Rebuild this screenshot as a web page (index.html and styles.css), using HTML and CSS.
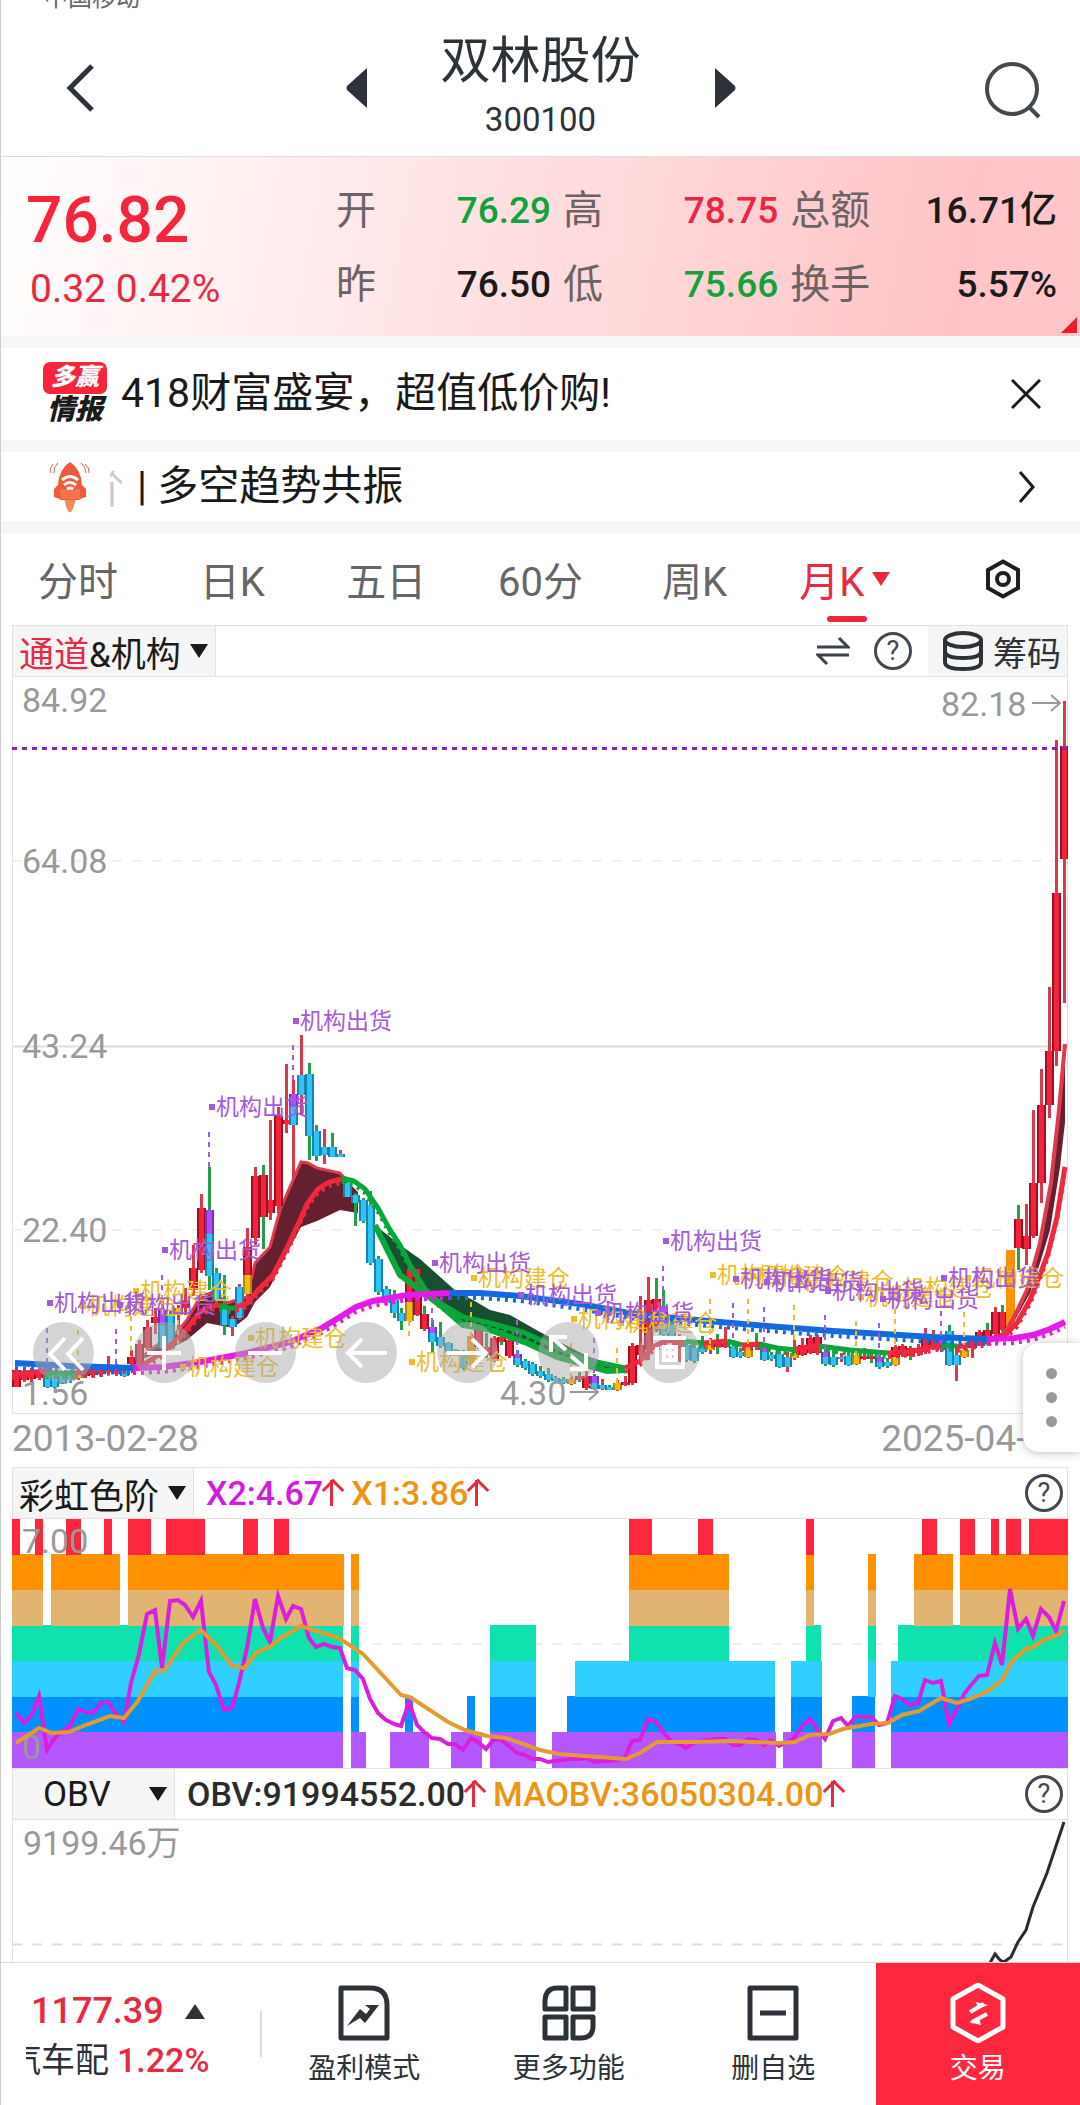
FILE: index.html
```html
<!DOCTYPE html>
<html lang="zh-CN">
<head>
<meta charset="utf-8">
<meta name="viewport" content="width=device-width, initial-scale=1">
<title>双林股份 300100</title>
<link rel="stylesheet" href="styles.css">
</head>
<body>
<div class="page">
  <div class="status"><span>中国移动</span></div>
  <header class="topbar">
    <button class="plain back" aria-label="返回"><svg width="34" height="52" viewBox="0 0 34 52"><path d="M29 4 7 26l22 22" fill="none" stroke="#2c3238" stroke-width="5"/></svg></button>
    <div class="title-group">
      <button class="plain" aria-label="上一只"><svg width="22" height="40" viewBox="0 0 22 40"><path d="M21 0v40L1 22q-1-2 0-4z" fill="#2c3238"/></svg></button>
      <div class="title"><h1>双林股份</h1><p>300100</p></div>
      <button class="plain" aria-label="下一只"><svg width="22" height="40" viewBox="0 0 22 40"><path d="M1 0v40l20-18q1-2 0-4z" fill="#2c3238"/></svg></button>
    </div>
    <button class="plain search" aria-label="搜索"><svg width="60" height="60" viewBox="0 0 60 60" fill="none" stroke="#44484f" stroke-width="4"><circle cx="29" cy="29" r="25"/><path d="m46 47 10 10"/></svg></button>
  </header>

  <section class="quote">
    <div class="price"><strong>76.82</strong><span>0.32 0.42%</span></div>
    <dl class="stats">
      <dt>开</dt><dd class="down">76.29</dd><dt>高</dt><dd class="up">78.75</dd><dt>总额</dt><dd>16.71亿</dd>
      <dt>昨</dt><dd>76.50</dd><dt>低</dt><dd class="down">75.66</dd><dt>换手</dt><dd>5.57%</dd>
    </dl>
    <i class="corner"></i>
  </section>

  <section class="notice">
    <span class="badge"><b>多赢</b><em>情报</em></span>
    <a href="#sale">418财富盛宴，超值低价购!</a>
    <button class="plain" aria-label="关闭"><svg width="30" height="30" viewBox="0 0 30 30"><path d="m1 1 28 28M29 1 1 29" stroke="#1a1a1a" stroke-width="3"/></svg></button>
  </section>

  <section class="notice signal">
    <svg width="44" height="52" viewBox="0 0 44 52">
      <path d="M17 37h12l-2 8q-3 8-4 6-2 1-4-6z" fill="#f58a5c"/>
      <path d="M23 1q11 7 12 23l4 4v8q-5 1-7 3H14q-2-2-7-3v-8l4-4Q12 8 23 1z" fill="#ee5a3c"/>
      <path d="M13 28h20v10H14z" fill="#f4754c"/>
      <path d="M15 19q8-7 16 0M17 24q6-5 12 0M20 28q3-2 6 0" fill="none" stroke="#fff" stroke-width="3"/>
      <path d="M6 3Q2 7 4 12M11 2Q6 6 7 12M38 3q5 4 4 9M34 2q5 4 5 10" fill="none" stroke="#d9604f" stroke-width="1"/>
    </svg>
    <span class="fragment">个</span>
    <a href="#signal">| 多空趋势共振</a>
    <svg width="20" height="34" viewBox="0 0 20 34"><path d="m3 2 13 15L3 32" fill="none" stroke="#1a1a1a" stroke-width="3"/></svg>
  </section>

  <nav class="tabs">
    <button class="plain">分时</button>
    <button class="plain">日K</button>
    <button class="plain">五日</button>
    <button class="plain">60分</button>
    <button class="plain">周K</button>
    <button class="plain active">月K<i class="tri"></i></button>
    <button class="plain" aria-label="设置"><svg width="40" height="40" viewBox="0 0 40 40" fill="none" stroke="#1d1f22" stroke-width="4"><path d="M20 2.500 35 11v18l-15 8.500L5 29V11z"/><circle cx="20" cy="20" r="6"/></svg></button>
  </nav>

  <main class="charts">
    <div class="bar">
      <button class="picker"><span><span class="up">通道</span>&amp;机构</span><i class="tri"></i></button>
      <div class="bar-tools">
        <button class="plain" aria-label="切换"><svg width="34" height="30" viewBox="0 0 34 30"><path d="M1 11h31l-9-9M33 19H2l9 9" fill="none" stroke="#3d4249" stroke-width="3"/></svg></button>
        <button class="plain help" aria-label="帮助">?</button>
      </div>
      <button class="chips"><svg width="42" height="40" viewBox="0 0 42 40" fill="none" stroke="#2c3238" stroke-width="4"><ellipse cx="21" cy="9" rx="18" ry="7"/><path d="M3 9v22q0 7 18 7t18-7V9M3 20q0 7 18 7t18-7"/></svg>筹码</button>
    </div>
    <div class="kline">
      <svg id="kline" viewBox="12 677 1056 737" role="img" aria-label="月K线图"></svg>
      <div class="tools">
        <button aria-label="最左"><svg viewBox="0 0 61 61"><path d="M32 16 17 32l15 16M50 16 35 32l15 16"/></svg></button>
        <button aria-label="放大"><svg viewBox="0 0 61 61"><path d="M30 14v34M13 31h34"/></svg></button>
        <button aria-label="缩小"><svg viewBox="0 0 61 61"><path d="M13 31h34"/></svg></button>
        <button aria-label="左移"><svg viewBox="0 0 61 61"><path d="M51 31H12M26 17 12 31l14 14"/></svg></button>
        <button aria-label="右移"><svg viewBox="0 0 61 61"><path d="M10 31h39M35 17l14 14-14 14"/></svg></button>
        <button aria-label="全屏"><svg viewBox="0 0 61 61"><path d="M13 30V15h16M13 15l15 13M48 31v16H32M48 47 33 34"/></svg></button>
        <button aria-label="画线"><svg viewBox="0 0 61 61"><path d="M14 16h33M18 25v20h26V25M25 25h12v13H25zM31 25v13M25 31h12"/></svg></button>
      </div>
    </div>
    <div class="dates"><time>2013-02-28</time><time>2025-04-18</time>
      <button class="handle" aria-label="更多"><i></i><i></i><i></i></button>
    </div>

    <div class="bar">
      <button class="picker">彩虹色阶<i class="tri"></i></button>
      <p class="values"><span class="mag">X2:4.67</span><i class="rise"></i><span class="org">X1:3.86</span><i class="rise"></i></p>
      <button class="plain help last" aria-label="帮助">?</button>
    </div>
    <svg id="rainbow" viewBox="12 0 1056 249" role="img" aria-label="彩虹色阶图"></svg>

    <div class="bar">
      <button class="picker obv">OBV<i class="tri"></i></button>
      <p class="values"><span>OBV:91994552.00</span><i class="rise"></i><span class="org">MAOBV:36050304.00</span><i class="rise"></i></p>
      <button class="plain help last" aria-label="帮助">?</button>
    </div>
    <svg viewBox="12 1820 1056 142" role="img" aria-label="OBV图">
      <path d="M12.500 1820v142M1067.500 1820v142" class="frame"/>
      <path d="M12 1944.500h1056" stroke="#ddd" stroke-width="2" stroke-dasharray="10 10"/>
      <text x="23" y="1855" class="axis">9199.46万</text>
      <path d="m990 1963 5-9 5 6 4 2 7-5 7-15 8-12 7-23 14-34 17-51" fill="none" stroke="#2b2b2b" stroke-width="3"/>
    </svg>
  </main>

  <footer class="bottom">
    <div class="index">
      <div class="index-top"><span class="up">1177.39</span><i class="tri upward"></i></div>
      <div class="index-row"><span class="sector">汽车配</span><span class="up">1.22%</span></div>
    </div>
    <button class="plain item"><svg viewBox="0 0 60 60"><path d="M7 5h29q17 0 17 17v33H7z"/><path d="m13 43 13-17 6 5 4-5-5-4h14L31 40l-5-5z" class="solid"/></svg>盈利模式</button>
    <button class="plain item"><svg viewBox="0 0 60 60"><path d="M18 5h9v21H6V17Q7 5 18 5zM34 5h20v21H34zM6 34h21v21H6zM34 34h20v9q0 12-12 12h-8z"/></svg>更多功能</button>
    <button class="plain item"><svg viewBox="0 0 60 60"><path d="M7 5h46v50H7zM17 30h26"/></svg>删自选</button>
    <button class="plain item trade"><svg viewBox="0 0 60 60"><path d="m30 2 25 14v28L30 58 5 44V16z"/><path d="m22 29 14-8M24 39l15-8" class="thin"/><path d="m28 19 12 3-10 4zM33 42l-12-3 10-4z" class="solid"/></svg>交易</button>
  </footer>
</div>
<script src="chart.js"></script>
</body>
</html>
```
FILE: styles.css
```css
* { box-sizing: border-box; }
body { margin: 0; background: #fff; color: #1a1a1a; font-family: Roboto, "Noto Sans CJK SC", sans-serif; font-size: 40px; }
h1, p, dl, dd { margin: 0; }
svg { display: block; flex: none; }
i, em { font-style: normal; }
a { color: inherit; text-decoration: none; }
button { font: inherit; color: inherit; border: 0; padding: 0; }
.plain { background: none; display: flex; align-items: center; justify-content: center; }
.page { border-left: 1px solid #ccc; }
.up { color: #e8293f; }
.down { color: #12a13c; }
.mag { color: #d41ae0; }
.org { color: #ee9413; }

.status { height: 12px; overflow: hidden; display: flex; align-items: flex-end; padding-left: 43px; font-size: 24px; line-height: 28px; color: #666; }
.topbar { height: 145px; border-bottom: 1px solid #ddd; display: grid; grid-template-columns: 1fr auto 1fr; align-items: center; padding: 8px 37px 0; color: #2c3238; }
.topbar .search { padding-top: 4px; justify-self: end; }
.back { margin-left: 25px; justify-self: start; }
.title-group { display: flex; align-items: center; gap: 73px; }
.title { text-align: center; }
.title h1 { font-size: 50px; line-height: 64px; font-weight: 400; }
.title p { font-size: 33px; line-height: 54px; }

.quote { position: relative; height: 179px; display: flex; background: linear-gradient(100deg, #fff 0%, #ffe4e5 40%, #ffc4c7 88%, #ffc6c9); }
.price { width: 335px; padding: 26px 0 0 25px; display: flex; flex-direction: column; color: #f5253c; }
.price strong { font-size: 64px; line-height: 76px; font-weight: 500; }
.price span { font-size: 39px; line-height: 60px; padding-left: 4px; color: #e8293f; }
.stats { flex: 1; display: grid; grid-template-columns: 40px 14fr 40px 14fr 80px 15fr; column-gap: 12px; grid-auto-rows: 74px; padding: 17px 23px 0 0; line-height: 74px; }
.stats dt { color: #6b6365; }
.stats dd { text-align: right; font-size: 37px; font-weight: 500; white-space: nowrap; }
.corner { position: absolute; right: 3px; bottom: 3px; border-left: 16px solid transparent; border-bottom: 16px solid #ec1c2e; }

.notice { height: 104px; border-top: 12px solid #f6f6f6; display: flex; align-items: center; padding: 0 39px 0 40px; gap: 12px; }
.notice a { flex: 1; color: #1a1a1a; font-size: 41px; line-height: 60px; padding-bottom: 2px; }
.signal { height: 81px; padding: 0 43px 0 46px; gap: 15px; }
.fragment { width: 12px; overflow: hidden; text-indent: -18px; white-space: nowrap; color: #ccc; margin-left: 4px; }
.badge { width: 68px; display: flex; flex-direction: column; align-items: center; font-size: 24px; line-height: 30px; font-weight: 900; font-style: italic; }
.badge b { width: 64px; height: 32px; border-radius: 7px; background: #f5253c; color: #fff; text-align: center; }
.badge em { font-style: italic; font-size: 28px; line-height: 32px; }

.tabs { height: 104px; border-top: 12px solid #f6f6f6; display: grid; grid-template-columns: repeat(7, 1fr); color: #666; }
.tabs button { position: relative; }
.tabs .active { color: #e8293f; gap: 8px; padding-right: 8px; }
.tabs .active::after { content: ""; position: absolute; bottom: 3px; left: 50%; margin-left: -22px; width: 40px; height: 6px; border-radius: 3px; background: #e8293f; }
.tri { flex: none; border: 9px solid transparent; border-top: 14px solid currentColor; border-bottom: 0; }
.tri.upward { border: 10px solid transparent; border-bottom: 15px solid #2c3238; border-top: 0; }

.charts { padding: 0 12px 0 11px; }
.charts > svg, .kline > svg { width: 100%; height: auto; }
.bar { height: 52px; border: 1px solid #e2e2e2; display: flex; font-size: 34px; }
.picker { display: flex; align-items: center; gap: 9px; padding: 0 7px 0 6px; background: #f5f5f5; border-right: 1px solid #e2e2e2; white-space: nowrap; font-size: 35px; }
.obv { width: 162px; justify-content: space-between; padding-left: 30px; }
.bar-tools { margin-left: auto; display: flex; gap: 24px; padding-right: 16px; }
.help { width: 38px; height: 38px; margin: 6px 0; border: 3px solid #44484f; border-radius: 50%; color: #44484f; font-size: 27px; }
.help.last { margin-left: auto; margin-right: 4px; }
.chips { display: flex; align-items: center; gap: 9px; padding: 0 6px 0 14px; background: #f5f5f5; color: #2c3238; }
.values { display: flex; align-items: center; padding-left: 12px; font-weight: 500; color: #2b2b2b; }
.rise { position: relative; width: 17px; height: 26px; margin-right: 11px; background: linear-gradient(#e8293f, #e8293f) center / 3px 26px no-repeat; }
.rise::before { content: ""; position: absolute; top: 2px; left: 2px; width: 13px; height: 13px; border: 3px solid #e8293f; border-width: 3px 0 0 3px; transform: rotate(45deg); }

.kline { position: relative; }
.frame { fill: none; stroke: #e2e2e2; stroke-width: 1; }
.axis { font-size: 34px; fill: #999; }
.mark { font-size: 23px; }
.tools { position: absolute; left: 21px; bottom: 31px; display: flex; gap: 40px; }
.tools button { width: 61px; height: 61px; border-radius: 50%; background: rgba(170, 170, 170, .5); }
.tools svg { fill: none; stroke: #fff; stroke-width: 4; }
.dates { position: relative; height: 53px; display: flex; justify-content: space-between; align-items: center; padding-bottom: 5px; font-size: 37px; color: #999; }
.handle { position: absolute; right: -12px; bottom: 15px; width: 57px; height: 109px; background: #fff; border-radius: 16px 0 0 16px; box-shadow: 0 1px 10px rgba(0, 0, 0, .25); display: flex; flex-direction: column; align-items: center; justify-content: center; gap: 13px; }
.handle i { width: 11px; height: 11px; border-radius: 50%; background: #999; }

.bottom { height: 143px; border-top: 1px solid #ddd; display: flex; color: #2c3238; }
.index { width: 261px; padding: 24px 0 0 25px; background: linear-gradient(#ddd, #ddd) right center / 2px 46px no-repeat; }
.index-top { display: flex; align-items: center; gap: 21px; font-size: 36px; line-height: 48px; padding-left: 5px; font-weight: 500; }
.index-row { display: flex; align-items: center; gap: 8px; font-size: 34px; line-height: 50px; }
.index-row .up { font-weight: 500; }
.sector { width: 83px; overflow: hidden; display: flex; justify-content: flex-end; white-space: nowrap; }
.item { flex: 1; flex-direction: column; justify-content: flex-start; padding-top: 20px; font-size: 28px; line-height: 40px; gap: 6px; }
.item svg { width: 60px; height: 60px; fill: none; stroke: #2c3238; stroke-width: 5; stroke-linejoin: round; }
.item .thin { stroke-width: 4; }
.item .solid { fill: #2c3238; stroke: none; }
.trade { background: #ff273d; color: #fff; }
.trade svg { stroke: #fff; }
.trade .solid { fill: #fff; }
```
FILE: chart.js
```javascript
const STEP = 1056 / 137;
const cx = i => Math.round(12 + STEP * (i + 0.5));
const COLORS = { r: ['#a50d20', '#f0253c'], c: ['#1883ac', '#2fc4f4'], p: ['#7a2fc0', '#b04cf5'], y: ['#b5850f', '#f7b80c'], o: ['#f59008', '#ff9205'] };
const WICK = { r: '#d93a4b', g: '#22a04a' };

// index, high, low, open/close top, bottom, body colour, wick colour, optional [split y, lower colour]
const candles = [
[0,1369,1387,1370,1387,'r','r'],[1,1370,1382,1372,1380,'r','r'],[2,1368,1382,1371,1379,'r','r'],[3,1365,1380,1370,1378,'r','r'],
[4,1367,1388,1367,1387,'p','g',1376,'c'],[5,1372,1388,1376,1387,'c','g'],[6,1372,1384,1375,1383,'c','g'],[7,1370,1383,1374,1380,'c','g'],
[8,1367,1380,1370,1378,'y','r'],[9,1366,1378,1370,1376,'r','r'],[10,1366,1378,1369,1375,'r','r'],[11,1365,1377,1368,1374,'r','r'],
[12,1356,1374,1366,1372,'r','r'],[13,1364,1376,1366,1374,'p','r'],[14,1366,1377,1370,1376,'c','g'],[15,1350,1366,1357,1364,'r','r'],
[16,1340,1364,1344,1363,'r','r'],[17,1320,1350,1327,1348,'r','r'],[18,1308,1334,1317,1323,'r','r'],[19,1300,1350,1310,1348,'p','r',1325,'c'],
[20,1310,1350,1315,1347,'c','g'],[21,1305,1332,1308,1315,'y','r'],[22,1288,1315,1300,1308,'r','r'],[23,1245,1296,1268,1290,'r','r'],
[24,1194,1273,1208,1270,'r','r'],[25,1167,1290,1210,1276,'p','g',1234,'c'],[26,1268,1305,1273,1300,'c','g'],[27,1275,1335,1308,1325,'c','g'],
[28,1316,1336,1319,1327,'c','r'],[29,1284,1320,1287,1318,'c','r'],[30,1228,1300,1247,1294,'r','r',1275,'y'],[31,1167,1245,1176,1238,'r','r'],
[32,1165,1249,1175,1217,'r','g'],[33,1120,1220,1200,1213,'r','r'],[34,1107,1213,1116,1206,'r','r'],[35,1064,1133,1120,1124,'r','r'],
[36,1080,1180,1094,1125,'p','r',1107,'c'],[37,1035,1114,1075,1095,'c','r'],[38,1063,1160,1074,1136,'c','g'],[39,1125,1161,1131,1156,'c','g'],
[40,1129,1164,1147,1155,'c','r'],[41,1133,1157,1147,1157,'c','g'],[42,1150,1157,1154,1157,'c','r'],[43,1181,1197,1183,1197,'c','g'],
[44,1193,1226,1195,1203,'c','g'],[45,1198,1223,1200,1221,'c','g'],[46,1191,1265,1205,1263,'c','g'],[47,1256,1295,1259,1292,'c','g'],
[48,1286,1305,1289,1303,'c','g'],[49,1290,1318,1300,1313,'c','g'],[50,1308,1330,1313,1321,'c','g'],[51,1269,1322,1269,1321,'r','r',1302,'y'],
[52,1269,1316,1269,1315,'r','r'],[53,1306,1331,1314,1329,'r','g'],[54,1320,1352,1327,1342,'p','g',1333,'c'],[55,1322,1348,1337,1346,'c','g'],
[56,1342,1353,1343,1352,'c','g'],[57,1349,1354,1350,1354,'c','g'],[58,1350,1370,1355,1368,'c','g'],[59,1334,1366,1336,1365,'o','r'],
[60,1328,1349,1330,1347,'r','r'],[61,1333,1358,1347,1355,'r','g'],[62,1336,1362,1338,1361,'r','r'],[63,1330,1345,1337,1342,'r','g'],
[64,1336,1358,1340,1356,'r','r'],[65,1350,1367,1354,1365,'p','g',1358,'c'],[66,1359,1370,1361,1368,'c','g'],[67,1362,1376,1364,1374,'c','g'],
[68,1366,1378,1371,1376,'c','g'],[69,1368,1382,1374,1380,'c','g'],[70,1376,1382,1378,1381,'c','g'],[71,1377,1384,1379,1383,'c','g'],
[72,1376,1385,1379,1384,'y','r'],[73,1372,1382,1376,1380,'r','g'],[74,1363,1390,1376,1388,'r','r'],[75,1374,1390,1376,1389,'p','g',1383,'c'],
[76,1379,1390,1385,1389,'c','r'],[77,1385,1390,1387,1390,'c','g'],[78,1380,1391,1383,1390,'y','r'],[79,1376,1386,1382,1385,'r','r'],
[80,1343,1385,1346,1383,'r','r'],[81,1296,1360,1345,1355,'r','r'],[82,1277,1360,1300,1350,'r','r'],[83,1278,1332,1299,1330,'r','g'],
[84,1290,1337,1306,1335,'p','g',1317,'c'],[85,1316,1340,1325,1337,'c','g'],[86,1334,1362,1342,1360,'r','r'],[87,1340,1362,1345,1360,'c','g'],
[88,1342,1363,1348,1361,'c','g'],[89,1336,1354,1346,1352,'c','g'],[90,1338,1354,1343,1350,'y','r'],[91,1334,1354,1342,1347,'r','g'],
[92,1327,1348,1342,1347,'r','r'],[93,1340,1358,1346,1357,'c','g'],[94,1348,1358,1352,1356,'c','g'],[95,1344,1358,1347,1357,'y','r'],
[96,1333,1350,1342,1347,'r','g'],[97,1344,1361,1346,1360,'p','g',1352,'c'],[98,1352,1361,1355,1359,'c','g'],[99,1350,1368,1354,1367,'c','g'],
[100,1352,1372,1357,1367,'c','r'],[101,1340,1360,1353,1358,'y','r'],[102,1338,1356,1345,1355,'r','r'],[103,1335,1354,1338,1353,'r','r'],
[104,1335,1355,1337,1353,'r','r'],[105,1348,1366,1352,1364,'p','g',1357,'c'],[106,1350,1367,1357,1365,'c','g'],[107,1353,1362,1357,1359,'c','r'],
[108,1350,1366,1356,1365,'c','g'],[109,1350,1365,1355,1364,'y','g'],[110,1348,1360,1356,1359,'r','r'],[111,1350,1363,1356,1359,'r','g'],
[112,1350,1369,1357,1367,'p','g',1362,'c'],[113,1358,1368,1362,1366,'c','g'],[114,1345,1366,1347,1365,'r','r',1357,'y'],[115,1344,1357,1346,1355,'r','r'],
[116,1346,1360,1348,1356,'r','g'],[117,1344,1356,1348,1353,'r','r'],[118,1328,1354,1338,1352,'r','r'],[119,1330,1350,1340,1348,'r','r'],
[120,1336,1352,1340,1350,'p','r'],[121,1325,1366,1331,1365,'c','g'],[122,1345,1381,1355,1365,'c','r'],[123,1345,1358,1350,1357,'y','r'],
[124,1336,1358,1338,1348,'r','r'],[125,1330,1346,1332,1343,'r','r'],[126,1323,1345,1330,1342,'r','g'],[127,1307,1336,1312,1334,'r','r'],
[128,1305,1332,1312,1330,'r','g'],[129,1250,1328,1250,1328,'o','r'],[130,1205,1270,1219,1248,'r','g'],[131,1204,1265,1236,1249,'r','r'],
[132,1110,1238,1183,1236,'r','r'],[133,1069,1203,1105,1183,'r','r'],[134,987,1118,1051,1105,'r','r'],[135,740,1066,893,1051,'r','r'],
[136,701,1003,746,859,'r','r']];

const poly = (pts, attrs) => `<polyline points="${pts}" fill="none" ${attrs}/>`;
const area = (pts, fill) => `<polygon points="${pts}" fill="${fill}"/>`;
let out = '<path class="frame" d="M12.5 677V1414M1067.5 677V1414M12 1413.5H1068"/>';
out += '<path d="M12 861H1068M12 1230H1068" stroke="#e2e2e2" stroke-dasharray="10 10"/><path d="M12 1046.500H1068" stroke="#ddd" stroke-width="2"/>';
[[700, '84.92'], [861, '64.08'], [1046, '43.24'], [1230, '22.40'], [1393, '1.56']].forEach(([y, t]) => {
  out += `<text class="axis" x="22" y="${y + 12}">${t}</text>`;
});

const RISE = '139,1360 153,1348 177,1332 187,1320 200,1297 213,1292 227,1303 247,1297 255,1263 270,1247 280,1210 301,1162 308,1163 317,1168 340,1173 348,1182';
const FALL = '625,1370 607,1371 557,1357 527,1343 487,1329 463,1325 440,1305 400,1275 375,1225';
const LAST = '1005,1333 1015,1315 1027,1290 1040,1243 1051,1183 1059,1110 1065,1044';
out += area(RISE + ' 358,1192 358,1213 340,1210 317,1221 301,1227 287,1253 270,1287 255,1302 247,1317 233,1328 207,1323 187,1340 167,1350', '#65202f');
out += poly(RISE, 'stroke="#e03a4c" stroke-width="3"');
out += area('375,1225 400,1245 420,1259 457,1292 473,1300 490,1310 510,1315 540,1332 587,1356 ' + FALL, '#17502f');

candles.forEach(([i, h, l, t, b, body, wick, split, lower]) => {
  const x = cx(i);
  const bar = (c, y1, y2) => `<rect x="${x - 4}" y="${y1}" width="9" height="${y2 - y1}" fill="${COLORS[c][0]}"/><rect x="${x - 2}" y="${y1}" width="5" height="${y2 - y1}" fill="${COLORS[c][1]}"/>`;
  out += `<rect x="${x - 1}" y="${h}" width="3" height="${l - h}" fill="${WICK[wick]}"/>`;
  out += split ? bar(body, t, split) + bar(lower, split, b) : bar(body, t, b);
});

out += area(LAST + ' 1065,1122 1060,1167 1050,1230 1040,1263 1030,1293 1015,1320', '#65202f') + poly(LAST, 'stroke="#e03a4c" stroke-width="4"');
out += poly(FALL, 'stroke="#08a83a" stroke-width="6"');

const RED = '#f0283f', GREEN = '#0aa63c', BLUE = '#136ae0', PINK = '#e61ae6';
const trend = [
[RED, '12,1374 46,1371'], [GREEN, '46,1373 75,1373'], [RED, '75,1373 133,1367 146,1363 160,1354 180,1337 200,1312 210,1306 220,1305'],
[GREEN, '220,1305 228,1308 236,1308'], [RED, '236,1307 247,1303 260,1288 273,1275 287,1248 300,1220 307,1204 318,1189 329,1182 342,1179'],
[GREEN, '342,1178 354,1181 365,1189 378,1208 390,1230 400,1245 410,1265 425,1289 440,1303 463,1317 490,1323 523,1332 547,1343 587,1360 625,1368'],
[RED, '625,1368 640,1361 653,1347 665,1341 683,1340'], [GREEN, '683,1341 703,1343'], [RED, '703,1343 727,1341'], [GREEN, '727,1341 742,1345'],
[RED, '742,1345 760,1344'], [GREEN, '760,1344 777,1348 796,1350'], [RED, '796,1349 819,1345'], [GREEN, '819,1346 850,1350 888,1353'],
[RED, '888,1353 913,1351 941,1345'], [GREEN, '941,1345 957,1346'], [RED, '957,1347 987,1341 1007,1333 1017,1323 1030,1300 1040,1275 1048,1253 1057,1217 1065,1167']];
const longTerm = [[BLUE, '15,1363 70,1366 133,1368'], [PINK, '133,1368 163,1367 200,1362 247,1353 290,1342 320,1329 340,1317 356,1307 373,1301 407,1295 449,1293'],
[BLUE, '449,1293 480,1293 520,1296 580,1304 640,1315 720,1322 767,1326 833,1331 933,1337 987,1339'], [PINK, '987,1339 1015,1338 1033,1335 1050,1329 1065,1322']];
trend.forEach(([c, p]) => { out += `<g transform="translate(0 4)">${poly(p, `stroke="${c}" stroke-width="4" stroke-dasharray="3 5"`)}</g>` + poly(p, `stroke="${c}" stroke-width="5"`); });
longTerm.forEach(([c, p]) => { out += `<g transform="translate(0 5)">${poly(p, `stroke="${c}" stroke-width="4" stroke-dasharray="3 5"`)}</g>` + poly(p, `stroke="${c}" stroke-width="6"`); });

const VIOLET = '#a55adb', GOLD = '#edbd2c';
[[4,1328,1368],[13,1329,1370],[19,1275,1310],[25,1132,1167],[36,1045,1080],[54,1308,1327],[65,1320,1354],[75,1338,1376],[84,1266,1306],[93,1303,1340],[97,1307,1346],[105,1315,1352],[112,1323,1356],[120,1311,1340]]
  .forEach(([i, a, b]) => { out += `<path d="M${cx(i)} ${a}V${b}" stroke="${VIOLET}" stroke-width="2" stroke-dasharray="5 5"/>`; });
[[8,1330,1370],[15,1316,1357],[21,1320,1345],[51,1321,1337],[59,1302,1336],[72,1343,1378],[78,1348,1383],[90,1299,1345],[95,1299,1345],[101,1305,1345],[109,1321,1355],[114,1309,1347],[123,1312,1345]]
  .forEach(([i, a, b]) => { out += `<path d="M${cx(i)} ${a}V${b}" stroke="${GOLD}" stroke-width="2" stroke-dasharray="5 5"/>`; });
const marks = { [GOLD]: [[80,1306],[133,1291],[248,1338],[180,1367],[471,1278],[571,1319],[409,1362],[618,1323],[710,1275],[750,1276],[795,1281],[895,1288],[858,1297],[965,1278]],
  [VIOLET]: [[47,1303],[117,1305],[162,1250],[209,1107],[293,1021],[432,1263],[518,1295],[595,1313],[663,1241],[733,1279],[764,1282],[825,1291],[880,1299],[941,1278]] };
Object.entries(marks).forEach(([c, list]) => list.forEach(([x, y]) => {
  out += `<rect x="${x}" y="${y - 3}" width="6" height="6" fill="${c}"/><text class="mark" x="${x + 7}" y="${y + 8}" fill="${c}">${c === GOLD ? '机构建仓' : '机构出货'}</text>`;
}));
out += '<path d="M12 748.500H1068" stroke="#8a22b8" stroke-width="3" stroke-dasharray="5 5"/>';
out += '<text class="axis" x="941" y="716">82.18</text><path d="M1032 703h28m-9-8 9 8-9 8" fill="none" stroke="#999" stroke-width="2"/>';
out += '<text class="axis" x="500" y="1405">4.30</text><path d="M570 1392h28m-9-8 9 8-9 8" fill="none" stroke="#999" stroke-width="2"/>';
document.getElementById('kline').innerHTML = out;

// Rainbow: one digit per month gives the stacked height
const LEVELS = '7667466776667' + '64' + '777' + '66' + '77777' + '66666' + '77' + '66' + '77' + '6666666' + '061000' + '11211' + '000' + '1121' + '0' + '444444' + '00' + '112' + '3333333' + '777' + '666666' + '77' + '66' + '333333' + '0' + '133' + '74' + '0000' + '226' + '00' + '344' + '677' + '664' + '7766' + '76' + '776' + '77777';
const BANDS = ['#b557ff', '#0090ff', '#2fd0ff', '#0fe2ae', '#e1b571', '#ff9000', '#ff273d'];
const H = 248, band = H / 7;
const sy = v => Math.round((v - 1523) / 257 * H);
let rb = '<path class="frame" d="M12.500 0V249M1067.500 0V249"/><path d="M12 125H1068" stroke="#ddd" stroke-dasharray="10 10"/>';
BANDS.forEach((fill, k) => {
  for (let i = 0; i < LEVELS.length; i++) {
    if (+LEVELS[i] <= k) continue;
    let end = i;
    while (+LEVELS[end] > k) end++;
    rb += `<rect x="${Math.round(12 + i * STEP)}" y="${Math.round(H - band * (k + 1))}" width="${Math.round((end - i) * STEP)}" height="${Math.ceil(band)}" fill="${fill}"/>`;
    i = end;
  }
});
const fast = [1724,1734,1727,1706,1762,1751,1743,1738,1720,1723,1724,1714,1713,1725,1733,1693,1663,1621,1617,1677,1608,1607,1612,1625,1608,1682,1695,1721,1719,1693,1657,1606,1636,1650,1603,1627,1613,1616,1646,1656,1653,1656,1657,1677,1679,1689,1710,1724,1731,1735,1738,1713,1736,1744,1750,1751,1756,1756,1762,1750,1754,1761,1751,1752,1758,1765,1768,1772,1772,1775,1774,1773,1772,1772,1771,1775,1774,1774,1773,1770,1753,1752,1730,1733,1744,1753,1756,1760,1755,1753,1752,1751,1751,1757,1757,1751,1752,1757,1752,1758,1754,1750,1737,1730,1741,1751,1732,1729,1737,1727,1728,1728,1736,1734,1706,1710,1716,1714,1690,1693,1691,1735,1722,1704,1694,1686,1685,1651,1674,1596,1637,1627,1644,1616,1625,1639,1608];
const slow = [[16,1755],[39,1740],[52,1745],[69,1744],[83,1737],[110,1727],[124,1729],[138,1712],[155,1681],[164,1680],[183,1651],[201,1638],[217,1655],[232,1675],[244,1677],[257,1661],[270,1656],[279,1647],[301,1634],[339,1646],[363,1663],[401,1705],[410,1707],[448,1733],[465,1742],[487,1748],[506,1750],[540,1762],[559,1767],[585,1769],[626,1772],[640,1765],[657,1754],[695,1754],[729,1753],[778,1755],[795,1754],[810,1747],[829,1746],[843,1741],[871,1735],[888,1734],[902,1726],[919,1722],[941,1709],[957,1714],[970,1710],[988,1701],[1003,1689],[1012,1670],[1026,1658],[1034,1656],[1043,1648],[1058,1643],[1064,1638]];
rb += '<text class="axis" x="22" y="34">7.00</text><text class="axis" x="22" y="240">0</text>';
rb += poly(fast.map((v, i) => `${cx(i)},${sy(v)}`).join(' '), 'stroke="#d91fdd" stroke-width="4"');
rb += poly(slow.map(([x, v]) => `${x},${sy(v)}`).join(' '), 'stroke="#e59a2f" stroke-width="4"');
document.getElementById('rainbow').innerHTML = rb;
```
